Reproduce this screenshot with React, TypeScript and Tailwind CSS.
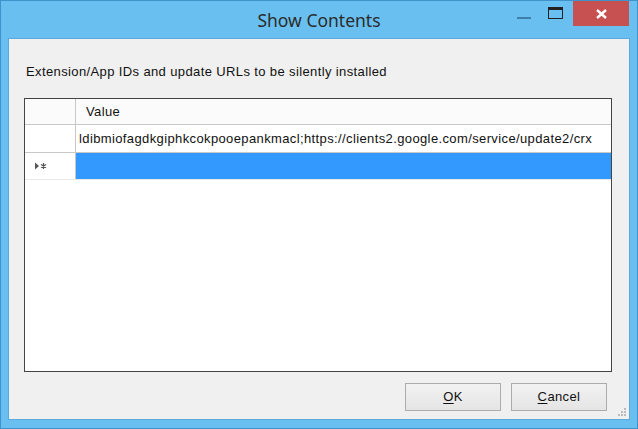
export default function App() {
  return (
    <div className="w-[638px] h-[429px] border border-[#3f93cb] bg-[#69c0f0] flex flex-col" style={{ fontFamily: '"Liberation Sans", Arial, sans-serif' }}>
      {/* title bar */}
      <div className="relative h-[37px] shrink-0">
        <div className="absolute inset-x-0 top-[6px] text-center text-[17.5px] text-[#2b2b2b]" style={{ fontFamily: '"Noto Sans", "Open Sans", sans-serif' }}>
          Show Contents
        </div>
        <div className="absolute left-[516px] top-[16px] w-[14px] h-[2px] bg-[#3e7ea8]" />
        <div className="absolute left-[547px] top-[6px] w-[15px] h-[12px] border border-[#222] border-t-[3px]" />
        <div className="absolute left-[572px] top-0 w-[56px] h-[25px] bg-[#c75050] flex items-center justify-center">
          <svg width="11" height="10" viewBox="0 0 11 10">
            <path d="M1 1 L10 9 M10 1 L1 9" stroke="#fff" strokeWidth="2.4" />
          </svg>
        </div>
      </div>

      {/* client area */}
      <div className="mx-[7px] mb-[8px] flex-1 border border-[#5aa8dc] bg-[#f0f0f0] flex flex-col relative text-[13px] tracking-[0.38px]">
        <div className="pl-[17px] pt-[25px] text-[#111] leading-[16px]">
          Extension/App IDs and update URLs to be silently installed
        </div>

        <div className="ml-[15px] mt-[18px] w-[588px] h-[274px] border border-[#444] bg-white text-[#111]">
          <div className="flex h-[26px] border-b border-[#c8c8c8]">
            <div className="w-[51px] border-r border-[#c8c8c8] bg-[#fbfbfb]" />
            <div className="flex-1 bg-[#fbfbfb] pl-[10px] flex items-center">Value</div>
          </div>
          <div className="flex h-[28px] border-b border-[#c8c8c8]">
            <div className="w-[51px] border-r border-[#c8c8c8]" />
            <div className="flex-1 pl-[3px] flex items-center whitespace-nowrap">
              ldibmiofagdkgiphkcokpooepankmacl;https://clients2.google.com/service/update2/crx
            </div>
          </div>
          <div className="flex h-[27px] border-b border-[#e8e8e8]">
            <div className="w-[51px] border-r border-[#c8c8c8] flex items-center pl-[10px]">
              <svg width="12" height="8" viewBox="0 0 12 8">
                <path d="M0 0.5 L4 4 L0 7.5 Z" fill="#555" />
                <path d="M8.5 1 V7 M6 2.5 L11 5.5 M11 2.5 L6 5.5" stroke="#555" strokeWidth="1.2" />
              </svg>
            </div>
            <div className="flex-1 bg-[#3399ff]" />
          </div>
        </div>

        <div className="flex justify-end gap-[10px] pr-[22px] mt-[11px]">
          <button className="w-[96px] h-[28px] border border-[#acacac] bg-gradient-to-b from-[#f2f2f2] to-[#e5e5e5] text-[#111]">
            <span className="underline underline-offset-2">O</span>K
          </button>
          <button className="w-[96px] h-[28px] border border-[#acacac] bg-gradient-to-b from-[#f2f2f2] to-[#e5e5e5] text-[#111]">
            <span className="underline underline-offset-2">C</span>ancel
          </button>
        </div>

        <svg className="absolute right-[2px] bottom-[2px]" width="10" height="10" viewBox="0 0 10 10">
          <rect x="7" y="1" width="2" height="2" fill="#bbb" />
          <rect x="4" y="4" width="2" height="2" fill="#bbb" />
          <rect x="7" y="4" width="2" height="2" fill="#bbb" />
          <rect x="1" y="7" width="2" height="2" fill="#bbb" />
          <rect x="4" y="7" width="2" height="2" fill="#bbb" />
          <rect x="7" y="7" width="2" height="2" fill="#bbb" />
        </svg>
      </div>
    </div>
  );
}
